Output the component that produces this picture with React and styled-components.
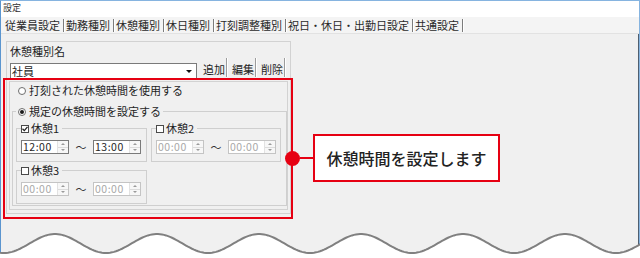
import React from "react";
import styled, { createGlobalStyle, css } from "styled-components";

const GlobalStyle = createGlobalStyle`
  html, body {
    margin: 0;
    padding: 0;
    background: #fff;
  }
  body {
    font-family: "Noto Sans CJK JP", "Noto Sans", sans-serif;
    color: #1e1e1e;
  }
`;

const TABS = [
  "従業員設定",
  "勤務種別",
  "休憩種別",
  "休日種別",
  "打刻調整種別",
  "祝日・休日・出勤日設定",
  "共通設定",
];

const BREAKS = [
  { label: "休憩1", checked: true, from: "12:00", to: "13:00" },
  { label: "休憩2", checked: false, from: "00:00", to: "00:00" },
  { label: "休憩3", checked: false, from: "00:00", to: "00:00" },
];

// wave at the bottom, sampled from a cosine
const wavePoints = () => {
  const pts = [];
  for (let x = -4; x <= 644; x += 2) {
    const y = 21.5 - 9.5 * Math.cos((2 * Math.PI * (x - 55)) / 102);
    pts.push(`${x},${y.toFixed(2)}`);
  }
  return pts;
};

const Wave = () => {
  const pts = wavePoints();
  const line = "M" + pts.join(" L");
  return (
    <WaveSvg width="640" height="40" viewBox="0 0 640 40">
      <path d={`${line} L644,40 L-4,40 Z`} fill="#fff" />
      <path d={line} fill="none" stroke="#808080" strokeWidth="2" />
    </WaveSvg>
  );
};

const Radio = ({ checked }) => <RadioDot $checked={checked} />;

const Check = ({ checked }) => (
  <CheckBox>
    {checked && (
      <svg width="6" height="6" viewBox="0 0 6 6">
        <path d="M0.5 2.8 L2.3 4.6 L5.5 0.8" fill="none" stroke="#222" strokeWidth="1.3" />
      </svg>
    )}
  </CheckBox>
);

const TimeInput = ({ value, disabled }) => (
  <TimeBox $disabled={disabled}>
    <TimeValue $disabled={disabled}>{value}</TimeValue>
    <Spin>
      <SpinHalf>
        <Arrow $up />
      </SpinHalf>
      <SpinHalf>
        <Arrow />
      </SpinHalf>
    </Spin>
  </TimeBox>
);

const BreakGroup = ({ label, checked, from, to }) => (
  <SubGroup>
    <SubLegend>
      <Check checked={checked} />
      <span>{label}</span>
    </SubLegend>
    <TimeRow>
      <TimeInput value={from} disabled={!checked} />
      <Tilde>〜</Tilde>
      <TimeInput value={to} disabled={!checked} />
    </TimeRow>
  </SubGroup>
);

const App = () => (
  <>
    <GlobalStyle />
    <Frame>
      <Window>
        <TitleBar>設定</TitleBar>
        <TabBar>
          {TABS.map(t => (
            <Tab key={t}>{t}</Tab>
          ))}
        </TabBar>
        <Body>
          <OuterGroup>
            <Label>休憩種別名</Label>
            <ComboRow>
              <Combo>
                <ComboText>社員</ComboText>
                <ComboButton />
              </Combo>
              <Buttons>
                <Btn>追加</Btn>
                <Btn>編集</Btn>
                <Btn>削除</Btn>
              </Buttons>
            </ComboRow>
            <InnerFrame>
              <RadioRow>
                <Radio />
                <span>打刻された休憩時間を使用する</span>
              </RadioRow>
              <RuleGroup>
                <RuleLegend>
                  <Radio checked />
                  <span>規定の休憩時間を設定する</span>
                </RuleLegend>
                <BreakGrid>
                  {BREAKS.map(b => (
                    <BreakGroup key={b.label} {...b} />
                  ))}
                </BreakGrid>
              </RuleGroup>
            </InnerFrame>
          </OuterGroup>
        </Body>
      </Window>
      <Highlight />
      <Callout>
        <Dot />
        <Connector />
        <CalloutBox>休憩時間を設定します</CalloutBox>
      </Callout>
      <Wave />
    </Frame>
  </>
);

const Frame = styled.div`
  position: relative;
  width: 640px;
  height: 258px;
  overflow: hidden;
  background: #fff;
`;

const Window = styled.div`
  box-sizing: border-box;
  height: 100%;
  display: flex;
  flex-direction: column;
  border: 1px solid #86b4e0;
  border-bottom: none;
  border-left-color: #5b95cf;
`;

const TitleBar = styled.div`
  height: 16px;
  padding-left: 2px;
  font-size: 9px;
  line-height: 14px;
  color: #333;
  background: #fff;
`;

const TabBar = styled.div`
  height: 16px;
  display: flex;
  align-items: center;
  padding-left: 2px;
  background: #f4f4f4;
  border-bottom: 1px solid #e2e2e2;
`;

const Tab = styled.div`
  font-size: 11px;
  line-height: 13px;
  padding: 0 3px 0 2px;
  color: #2a2a2a;
  border-right: 1px solid #7c7c7c;
  box-shadow: 1px 0 0 #fff;
  white-space: nowrap;
`;

const Body = styled.div`
  flex: 1;
  background: #f0f0f0;
  border-right: 1px solid #4f5f70;
  padding: 7px 0 0 5px;
`;

const OuterGroup = styled.div`
  box-sizing: border-box;
  width: 285px;
  border: 1px solid #d2d2d2;
  padding: 2px 2px 3px 2px;
`;

const Label = styled.div`
  font-size: 11px;
  line-height: 14px;
  padding-left: 1px;
`;

const ComboRow = styled.div`
  display: flex;
  align-items: flex-end;
  padding-left: 1px;
`;

const Combo = styled.div`
  box-sizing: border-box;
  width: 187px;
  height: 16px;
  display: flex;
  align-items: center;
  background: #fff;
  border: 1px solid #7a7a7a;
`;

const ComboText = styled.div`
  flex: 1;
  font-size: 11px;
  line-height: 14px;
  padding-left: 1px;
`;

const ComboButton = styled.div`
  width: 12px;
  height: 12px;
  display: flex;
  align-items: center;
  justify-content: center;
  margin-right: 1px;
  &::after {
    content: "";
    border-left: 3px solid transparent;
    border-right: 3px solid transparent;
    border-top: 3px solid #111;
  }
`;

const Buttons = styled.div`
  display: flex;
  margin-left: 1px;
  margin-bottom: 2px;
`;

const Btn = styled.div`
  box-sizing: border-box;
  width: 29px;
  height: 19px;
  padding: 5px 0 0 5px;
  font-size: 11px;
  line-height: 13px;
  border-right: 1px solid #9c9c9c;
  box-shadow: 1px 0 0 #fff;
`;

const InnerFrame = styled.div`
  box-sizing: border-box;
  width: 279px;
  margin-top: 2px;
  border: 1px solid #d2d2d2;
  padding: 2px 1px 3px 2px;
  display: flex;
  flex-direction: column;
`;

const RadioRow = styled.div`
  display: flex;
  align-items: center;
  gap: 3px;
  padding-left: 6px;
  font-size: 11px;
  line-height: 13px;
`;

const RadioDot = styled.span`
  box-sizing: border-box;
  width: 8px;
  height: 8px;
  border-radius: 50%;
  border: 1px solid #6e6e6e;
  background: #fff;
  display: inline-flex;
  align-items: center;
  justify-content: center;
  ${p =>
    p.$checked &&
    css`
      &::after {
        content: "";
        width: 4px;
        height: 4px;
        border-radius: 50%;
        background: #1a1a1a;
      }
    `}
`;

const RuleGroup = styled.fieldset`
  box-sizing: border-box;
  width: 275px;
  margin: 8px 0 0;
  padding: 0 2px 1px 3px;
  border: 1px solid #cfcfcf;
  min-width: 0;
`;

const RuleLegend = styled.legend`
  display: flex;
  align-items: center;
  gap: 3px;
  padding: 0 2px;
  font-size: 11px;
  line-height: 13px;
`;

const BreakGrid = styled.div`
  display: grid;
  grid-template-columns: 131px 130px;
  column-gap: 4px;
  row-gap: 2px;
  margin-top: 4px;
`;

const SubGroup = styled.fieldset`
  box-sizing: border-box;
  margin: 0;
  padding: 0 4px 7px 4px;
  border: 1px solid #cfcfcf;
  min-width: 0;
`;

const SubLegend = styled.legend`
  display: flex;
  align-items: center;
  gap: 2px;
  padding: 0 3px 0 0;
  font-size: 11px;
  line-height: 13px;
`;

const CheckBox = styled.span`
  box-sizing: border-box;
  width: 8px;
  height: 8px;
  border: 1px solid #4a4a4a;
  background: #fff;
  display: inline-flex;
  align-items: center;
  justify-content: center;
`;

const TimeRow = styled.div`
  display: flex;
  align-items: center;
  margin-top: 5px;
`;

const Tilde = styled.span`
  width: 12px;
  margin: 0 6px;
  text-align: center;
  font-size: 11px;
  line-height: 13px;
  color: #333;
`;

const TimeBox = styled.div`
  box-sizing: border-box;
  width: 48px;
  height: 14px;
  display: flex;
  background: #fff;
  border: 1px solid ${p => (p.$disabled ? "#c4c4c4" : "#7a7a7a")};
`;

const TimeValue = styled.div`
  flex: 1;
  font-size: 10.5px;
  line-height: 12px;
  padding-left: 1px;
  letter-spacing: 0.5px;
  color: ${p => (p.$disabled ? "#a8a8a8" : "#1e1e1e")};
`;

const Spin = styled.div`
  width: 10px;
  display: flex;
  flex-direction: column;
  border-left: 1px solid #e2e2e2;
`;

const SpinHalf = styled.div`
  flex: 1;
  display: flex;
  align-items: center;
  justify-content: center;
  background: #f7f7f7;
  & + & {
    border-top: 1px solid #dcdcdc;
  }
`;

const Arrow = styled.span`
  border-left: 2px solid transparent;
  border-right: 2px solid transparent;
  ${p =>
    p.$up
      ? css`
          border-bottom: 2px solid #9a9a9a;
        `
      : css`
          border-top: 2px solid #9a9a9a;
        `}
`;

const Highlight = styled.div`
  position: absolute;
  left: 3px;
  top: 78px;
  width: 290px;
  height: 141px;
  box-sizing: border-box;
  border: 2px solid #e60012;
  pointer-events: none;
`;

const Callout = styled.div`
  position: absolute;
  left: 285px;
  top: 134px;
  display: flex;
  align-items: center;
`;

const Dot = styled.div`
  width: 15px;
  height: 15px;
  border-radius: 50%;
  background: #e60012;
`;

const Connector = styled.div`
  width: 13px;
  height: 2px;
  background: #e60012;
`;

const CalloutBox = styled.div`
  box-sizing: border-box;
  width: 187px;
  height: 48px;
  display: flex;
  align-items: center;
  justify-content: center;
  background: #fff;
  border: 2px solid #e60012;
  font-size: 16px;
  font-weight: 500;
  color: #222;
`;

const WaveSvg = styled.svg`
  position: absolute;
  left: 0;
  top: 222px;
  display: block;
`;

export default App;
